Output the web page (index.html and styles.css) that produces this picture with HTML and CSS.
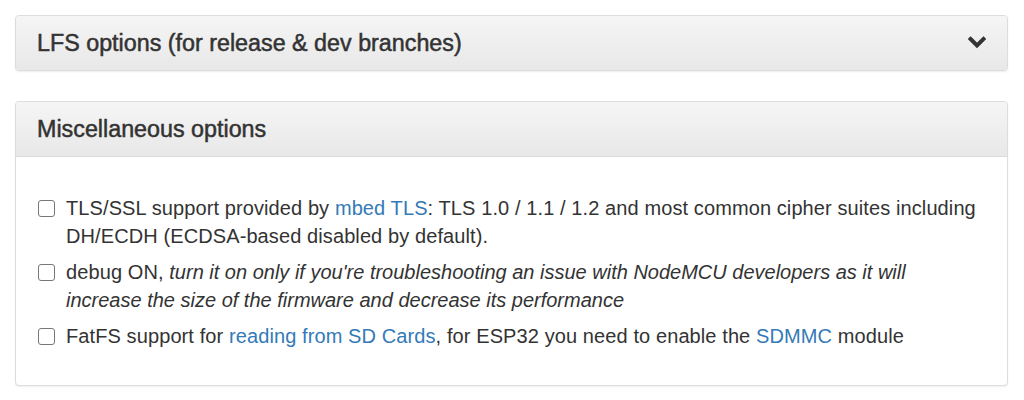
FILE: index.html
```html
<!DOCTYPE html>
<html>
<head>
<meta charset="utf-8">
<link rel="stylesheet" href="styles.css">
</head>
<body>
<div class="page">
  <div class="panel">
    <div class="panel-heading">
      <h3 class="panel-title">LFS options (for release &amp; dev branches)</h3>
      <svg class="chevron" width="18" height="13" viewBox="0 0 18 13"><polyline points="2.5,3 9,9.5 15.5,3" fill="none" stroke="#333" stroke-width="4" stroke-linecap="square"/></svg>
    </div>
  </div>
  <div class="panel">
    <div class="panel-heading">
      <h3 class="panel-title">Miscellaneous options</h3>
    </div>
    <div class="panel-body">
      <label class="option"><span class="box"></span><span class="text">TLS/SSL support provided by <a href="#">mbed TLS</a>: TLS 1.0 / 1.1 / 1.2 and most common cipher suites including DH/ECDH (ECDSA-based disabled by default).</span></label>
      <label class="option"><span class="box"></span><span class="text">debug ON, <em>turn it on only if you're troubleshooting an issue with NodeMCU developers as it will increase the size of the firmware and decrease its performance</em></span></label>
      <label class="option"><span class="box"></span><span class="text">FatFS support for <a href="#">reading from SD Cards</a>, for ESP32 you need to enable the <a href="#">SDMMC</a> module</span></label>
    </div>
  </div>
</div>
</body>
</html>
```
FILE: styles.css
```css
html, body {
  margin: 0;
  padding: 0;
  background: #fff;
}
body {
  font-family: "Liberation Sans", Arial, sans-serif;
  color: #333;
}
.page {
  padding: 15px 16px 0 15px;
}
.panel {
  border: 1px solid #ddd;
  border-radius: 4px;
  box-shadow: 0 1px 2px rgba(0,0,0,0.07);
  margin-bottom: 30px;
  background: #fff;
}
.panel-heading {
  display: flex;
  align-items: center;
  justify-content: space-between;
  height: 54px;
  padding: 0 21px 0 21px;
  background: linear-gradient(to bottom, #f5f5f5 0%, #e8e8e8 100%);
  border-radius: 3px;
}
.panel-heading:not(:last-child) {
  border-bottom: 1px solid #ddd;
  border-radius: 3px 3px 0 0;
}
.panel-title {
  margin: 0;
  font-size: 23.3px;
  font-weight: normal;
  color: #333;
  -webkit-text-stroke: 0.5px #333;
}
.chevron {
  display: block;
  margin-top: -2px;
}
.panel-body {
  padding: 37px 22px 35px 22px;
  display: flex;
  flex-direction: column;
  gap: 8px;
}
.option {
  display: flex;
  align-items: flex-start;
  font-size: 20px;
  letter-spacing: 0.1px;
  line-height: 28px;
}
.option em {
  letter-spacing: 0;
}
.box {
  flex: none;
  width: 15px;
  height: 15px;
  border: 1px solid #777;
  border-radius: 3px;
  margin: 6px 11px 0 0;
  background: #fff;
}
.text {
  flex: 1;
}
a {
  color: #337ab7;
  text-decoration: none;
}
```
